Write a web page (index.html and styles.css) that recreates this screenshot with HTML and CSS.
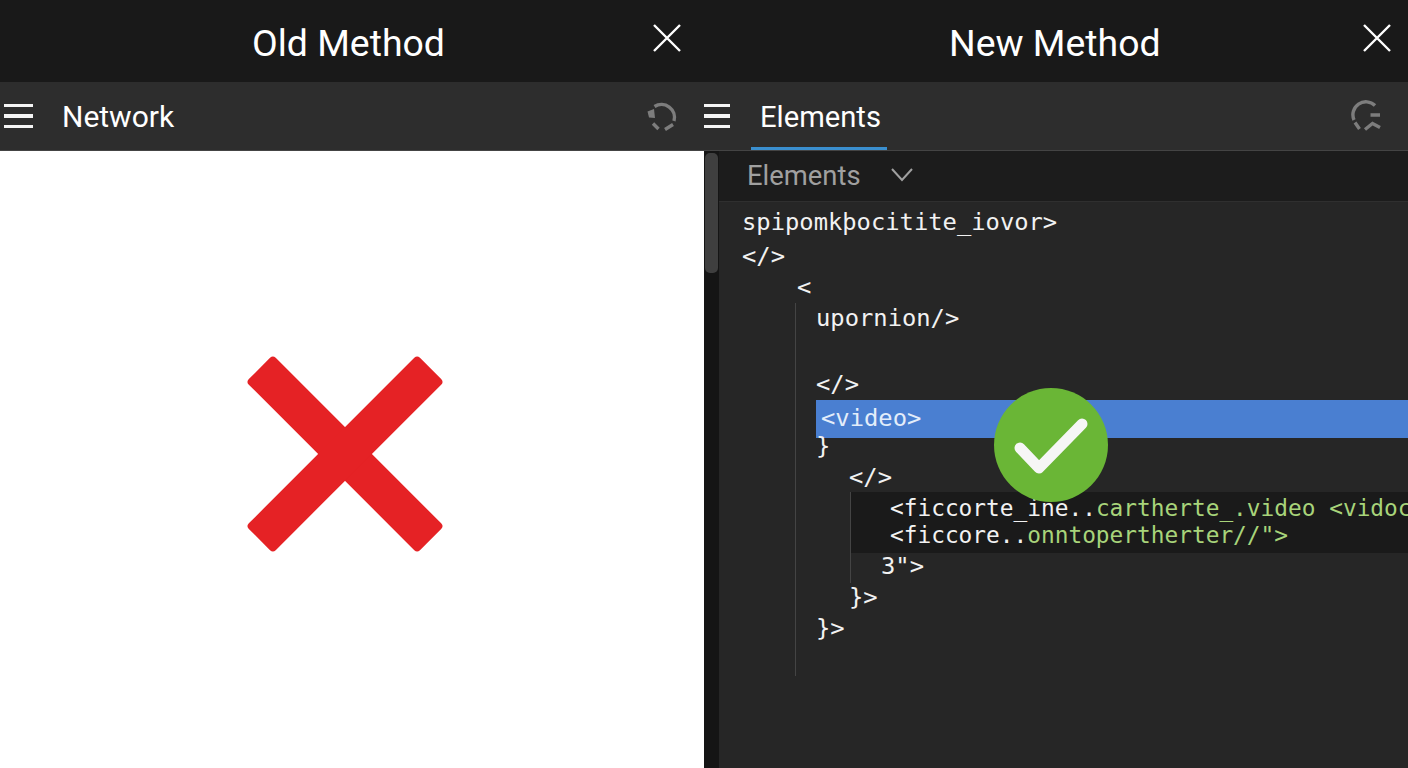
FILE: index.html
```html
<!DOCTYPE html>
<html lang="en">
<head>
  <meta charset="UTF-8">
  <title>Old Method / New Method</title>
  <link rel="stylesheet" href="styles.css">
</head>
<body>
  <div class="compare">

    <!-- old method -->
    <div class="pane">
      <div class="title-bar old">
        <h2>Old Method</h2>
        <svg class="close" viewBox="0 0 28 28"><path d="M1 1 27 27M27 1 1 27"/></svg>
      </div>
      <div class="toolbar">
        <div class="burger"><span></span><span></span><span></span></div>
        <div class="tab">Network</div>
        <svg class="reload" viewBox="0 0 32 32">
          <path class="arc" d="M8.5 6.5A13 13 0 0 1 28 21"/>
          <path class="blob" d="M1.5 11.5 8 9 9 18 3 17.5Z"/>
          <path class="arc" d="M7 23.5 12.5 29M19 29.5 27 24.5"/>
        </svg>
      </div>
      <div class="blank">
        <svg class="cross" viewBox="0 0 202 202">
          <rect x="-20" y="82" width="242" height="38" rx="4" transform="rotate(45 101 101)"/>
          <rect x="-20" y="82" width="242" height="38" rx="4" transform="rotate(-45 101 101)"/>
        </svg>
      </div>
    </div>

    <!-- new method -->
    <div class="pane">
      <div class="title-bar new">
        <h2>New Method</h2>
        <svg class="close" viewBox="0 0 28 28"><path d="M1 1 27 27M27 1 1 27"/></svg>
      </div>
      <div class="toolbar">
        <div class="burger"><span></span><span></span><span></span></div>
        <div class="tab active">Elements</div>
        <svg class="reload" viewBox="0 0 32 32">
          <path class="arc" d="M26 5.5A13 13 0 0 0 5 20"/>
          <path class="arc" d="M21.5 15H31M6 22.5 10.5 29M16 29.5 23.5 23.5 31 27.5"/>
        </svg>
      </div>
      <div class="devtools">
        <div class="scrollbar"><div class="thumb"></div></div>
        <div class="panel">
          <div class="sub-bar">
            <span>Elements</span>
            <svg class="chevron" viewBox="0 0 22 14"><path d="M1 1 11 12 21 1"/></svg>
          </div>
          <div class="code">
            <div class="guide guide-outer"></div>
            <div class="guide guide-inner"></div>

            <div class="line i1">spipomkþocitite_iovor&gt;</div>
            <div class="line i1 gap-s">&lt;/&gt;</div>
            <div class="line i2">&lt;</div>
            <div class="line i3">upornion/&gt;</div>
            <div class="line i3 gap-l">&lt;/&gt;</div>
            <div class="highlight">&lt;video&gt;</div>
            <div class="line i3 after-highlight">}</div>
            <div class="line i4">&lt;/&gt;</div>
            <div class="block">
              <div class="block-line">&lt;ficcorte_ine..<span class="green">cartherte_.video &lt;vidoc</span></div>
              <div class="block-line">&lt;ficcore..<span class="green">onntopertherter//"&gt;</span></div>
            </div>
            <div class="line i5 after-block">3"&gt;</div>
            <div class="line i4">}&gt;</div>
            <div class="line i3">}&gt;</div>

            <div class="check">
              <svg viewBox="0 0 114 114"><path d="M26 60 45 80 88 36"/></svg>
            </div>
          </div>
        </div>
      </div>
    </div>

  </div>
</body>
</html>
```

FILE: styles.css
```css
body {
  margin: 0;
  height: 768px;
  overflow: hidden;
  background: #191919;
  font-family: 'Roboto', sans-serif;
  color: #fff;
}

.compare {
  display: grid;
  grid-template-columns: 704px 704px;
  height: 768px;
}

.pane {
  display: flex;
  flex-direction: column;
  min-width: 0;
  height: 768px;
}

.title-bar {
  height: 82px;
  flex: none;
  display: flex;
  align-items: center;
  background: #191919;
}

.title-bar h2 {
  margin: 4px 0 0;
  font-size: 37.4px;
  font-weight: 400;
  line-height: 44px;
  white-space: nowrap;
}

.title-bar.old h2 {
  margin-left: 252px;
}

.title-bar.new h2 {
  margin-left: 245px;
}

.close {
  width: 28px;
  height: 28px;
  margin-left: auto;
  margin-top: -6px;
}

.title-bar.old .close {
  margin-right: 23px;
}

.title-bar.new .close {
  margin-right: 17px;
}

.close path {
  fill: none;
  stroke: #fff;
  stroke-width: 2.4;
}

.toolbar {
  height: 69px;
  flex: none;
  display: flex;
  align-items: center;
  box-sizing: border-box;
  background: #2d2d2d;
  border-bottom: 1px solid #444;
}

.burger {
  width: 29px;
  margin-left: 4px;
  display: flex;
  flex-direction: column;
  gap: 7px;
}

.pane:last-child .burger {
  width: 26px;
  margin-left: 0;
}

.burger span {
  height: 3.5px;
  background: #f5f5f5;
}

.tab {
  height: 68px;
  box-sizing: border-box;
  margin-left: 29px;
  font-size: 30px;
  line-height: 70px;
}

.tab.active {
  margin-left: 21px;
  padding: 0 6px 0 9px;
  font-size: 29.2px;
  border-bottom: 3px solid #3a8fcf;
}

.reload {
  width: 32px;
  height: 32px;
  margin-left: auto;
}

.pane:first-child .reload {
  margin-right: 26px;
}

.pane:last-child .reload {
  margin-right: 27px;
}

.reload .arc {
  fill: none;
  stroke: #7d7d7d;
  stroke-width: 3.4;
}

.reload .blob {
  fill: #7d7d7d;
}

.blank {
  flex: 1;
  display: flex;
  align-items: center;
  justify-content: center;
  padding: 0 14px 12px 0;
  background: #fff;
}

.cross {
  width: 202px;
  height: 202px;
}

.cross rect {
  fill: #e52225;
}

.devtools {
  flex: 1;
  min-height: 0;
  display: flex;
}

.scrollbar {
  width: 15px;
  flex: none;
  background: #151515;
  padding: 2px 1px;
  box-sizing: border-box;
}

.thumb {
  height: 120px;
  background: #3f3f3f;
  border-radius: 5px;
}

.panel {
  flex: 1;
  min-width: 0;
  display: flex;
  flex-direction: column;
}

.sub-bar {
  height: 51px;
  flex: none;
  box-sizing: border-box;
  display: flex;
  align-items: center;
  padding-left: 28px;
  background: #1c1c1c;
  border-bottom: 1px solid #2f2f2f;
  font-size: 27.4px;
  color: #a0a0a0;
}

.chevron {
  width: 22px;
  height: 14px;
  margin-left: 30px;
  margin-top: -3px;
}

.chevron path {
  fill: none;
  stroke: #a0a0a0;
  stroke-width: 2;
}

.code {
  position: relative;
  flex: 1;
  overflow: hidden;
  padding-top: 5px;
  background: #262626;
  font-family: 'DejaVu Sans Mono', monospace;
  font-size: 23.8px;
  color: #f2f2f2;
  white-space: nowrap;
}

.line {
  height: 31px;
  line-height: 31px;
}

.i1 { padding-left: 23px; }
.i2 { padding-left: 78px; }
.i3 { padding-left: 97px; }
.i4 { padding-left: 130px; }
.i5 { padding-left: 162px; }

.gap-s { margin-top: 3px; }
.gap-l { margin-top: 35px; }

.highlight {
  height: 38px;
  line-height: 37px;
  margin-left: 97px;
  padding-left: 5px;
  background: #4a7fd1;
  color: #e3edfa;
}

.after-highlight {
  margin-top: -7px;
}

.block {
  margin: -1px 0 0 131px;
  padding: 3px 0 4px 40px;
  background: #1a1a1a;
  font-size: 22.8px;
}

.block-line {
  height: 27px;
  line-height: 27px;
}

.green {
  color: #a8d47a;
}

.after-block {
  margin-top: -2px;
}

.guide {
  position: absolute;
  width: 1px;
  background: #444;
}

.guide-outer {
  left: 76px;
  top: 101px;
  height: 373px;
}

.guide-inner {
  left: 131px;
  top: 290px;
  height: 91px;
}

.check {
  position: absolute;
  left: 275px;
  top: 186px;
  width: 114px;
  height: 114px;
  border-radius: 50%;
  background: #6ab636;
}

.check svg {
  display: block;
  width: 114px;
  height: 114px;
}

.check path {
  fill: none;
  stroke: #f6f6f6;
  stroke-width: 11;
  stroke-linecap: round;
  stroke-linejoin: round;
}
```
